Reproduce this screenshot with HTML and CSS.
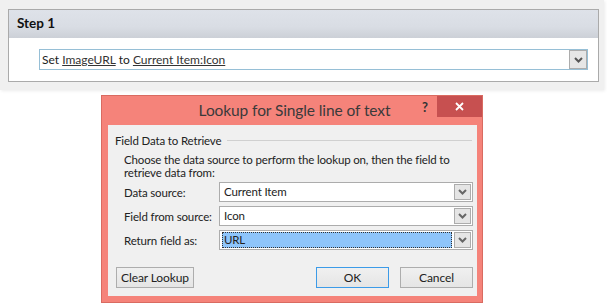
FILE: index.html
```html
<!DOCTYPE html>
<html lang="en">
<head>
  <meta charset="UTF-8" />
  <title>Workflow Step</title>
  <link rel="stylesheet" href="styles.css">
</head>
<body>
  <!-- Workflow step -->
  <div class="workflow">
    <div class="step">
      <div class="step-head">Step 1</div>
      <div class="step-body">
        <div class="action">
          <span class="action-text">Set <a href="#">ImageURL</a> to <a href="#">Current Item:Icon</a></span>
          <span class="drop-btn">
            <svg width="9" height="6" viewBox="0 0 9 6"><path d="M1 1 L4.5 4.5 L8 1" fill="none" stroke="#555" stroke-width="2"/></svg>
          </span>
        </div>
      </div>
    </div>
  </div>

  <!-- Lookup dialog -->
  <div class="dialog">
    <div class="titlebar">
      <span class="title">Lookup for Single line of text</span>
      <span class="help">?</span>
      <span class="close">
        <svg width="9" height="9" viewBox="0 0 9 9"><path d="M1 1 L8 8 M8 1 L1 8" stroke="#fff" stroke-width="1.8"/></svg>
      </span>
    </div>
    <div class="content">
      <div class="group-head">
        <span>Field Data to Retrieve</span>
        <span class="group-line"></span>
      </div>
      <p class="intro">Choose the data source to perform the lookup on, then the field to<br>retrieve data from:</p>

      <div class="row first">
        <label>Data source:</label>
        <div class="select">
          <span class="select-value">Current Item</span>
          <span class="drop-btn small">
            <svg width="9" height="6" viewBox="0 0 9 6"><path d="M1 1 L4.5 4.5 L8 1" fill="none" stroke="#666" stroke-width="2"/></svg>
          </span>
        </div>
      </div>
      <div class="row">
        <label>Field from source:</label>
        <div class="select">
          <span class="select-value">Icon</span>
          <span class="drop-btn small">
            <svg width="9" height="6" viewBox="0 0 9 6"><path d="M1 1 L4.5 4.5 L8 1" fill="none" stroke="#666" stroke-width="2"/></svg>
          </span>
        </div>
      </div>
      <div class="row">
        <label>Return field as:</label>
        <div class="select">
          <span class="select-value selected">URL</span>
          <span class="drop-btn small">
            <svg width="9" height="6" viewBox="0 0 9 6"><path d="M1 1 L4.5 4.5 L8 1" fill="none" stroke="#666" stroke-width="2"/></svg>
          </span>
        </div>
      </div>

      <div class="buttons">
        <button class="btn wide">Clear Lookup</button>
        <span class="spacer"></span>
        <button class="btn default">OK</button>
        <button class="btn">Cancel</button>
      </div>
    </div>
  </div>
</body>
</html>
```

FILE: styles.css
```css
* {
  margin: 0;
  padding: 0;
  box-sizing: border-box;
}

body {
  font-family: Lato, 'Liberation Sans', sans-serif;
  font-size: 11.5px;
  letter-spacing: -0.15px;
  color: #222;
  background: #fff;
}

/* Workflow step */
.workflow {
  width: 604px;
  height: 90px;
  background: #f0f0f0;
  padding: 9px 0 0 8px;
  box-shadow: 1px 1px 3px rgba(0, 0, 0, 0.08);
}

.step {
  width: 591px;
  height: 73px;
  border: 1px solid #aaa;
  background: #fff;
}

.step-head {
  height: 28px;
  padding-left: 8px;
  line-height: 27px;
  font-size: 13.5px;
  letter-spacing: 0;
  font-weight: bold;
  color: #111;
  background: linear-gradient(to bottom, #dee2e9, #d9dde4 60%, #ccd0d7);
}

.step-body {
  padding: 11px 0 0 30px;
}

.action {
  width: 549px;
  height: 21px;
  border: 1px solid #96bfd6;
  display: flex;
  align-items: stretch;
  justify-content: space-between;
}

.action-text {
  padding-left: 2px;
  font-size: 12px;
  letter-spacing: 0;
  line-height: 19px;
  color: #222;
}

.action-text a {
  color: #333;
  text-decoration: underline;
}

.drop-btn {
  width: 18px;
  display: flex;
  align-items: center;
  justify-content: center;
  background: #e6e6e6;
  border: 1px solid #acacac;
}

/* Dialog */
.dialog {
  width: 382px;
  height: 208px;
  margin: 5px 0 0 101px;
  background: #f5837a;
  border: 1px solid #d96b61;
  padding: 0 5px 6px 6px;
  display: flex;
  flex-direction: column;
}

.titlebar {
  height: 29px;
  display: flex;
  align-items: flex-start;
}

.title {
  flex: 1;
  text-align: center;
  font-size: 15.5px;
  letter-spacing: -0.1px;
  line-height: 29px;
  color: #3a3a3a;
  padding-left: 80px;
  white-space: nowrap;
}

.help {
  width: 36px;
  font-size: 13px;
  font-weight: bold;
  line-height: 22px;
  color: #333;
  padding-left: 21px;
}

.close {
  width: 45px;
  height: 21px;
  margin-right: -5px;
  background: #c75050;
  display: flex;
  align-items: center;
  justify-content: center;
}

.content {
  flex: 1;
  background: #f0f0f0;
  padding: 6px 4px 0 8px;
  display: flex;
  flex-direction: column;
}

.group-head {
  display: flex;
  align-items: center;
  gap: 6px;
  height: 18px;
  margin-left: -1px;
  padding-right: 1px;
  color: #222;
}

.group-line {
  flex: 1;
  height: 1px;
  background: #d0d0d0;
}

.intro {
  margin: 4px 0 0 8px;
  line-height: 13px;
  white-space: nowrap;
  color: #222;
}

.row {
  display: flex;
  align-items: center;
  margin: 4px 0 0 8px;
}

.row.first {
  margin-top: 3px;
}

.row label {
  width: 95px;
  flex-shrink: 0;
  white-space: nowrap;
}

.select {
  flex: 1;
  height: 20px;
  background: #fff;
  border: 1px solid #acacac;
  display: flex;
  padding: 1px 1px 1px 2px;
}

.select-value {
  flex: 1;
  line-height: 16px;
  padding-left: 2px;
  margin-right: 2px;
}

.select-value.selected {
  background: #8ec5fb;
  outline: 1px dotted #333;
  outline-offset: -1px;
}

.drop-btn.small {
  width: 17px;
  background: #e5e5e5;
}

.buttons {
  display: flex;
  margin-top: auto;
  margin-bottom: 8px;
  gap: 11px;
}

.spacer {
  flex: 1;
}

.btn {
  width: 73px;
  height: 21px;
  font-family: inherit;
  font-size: 12px;
  letter-spacing: -0.1px;
  color: #222;
  background: linear-gradient(to bottom, #f0f0f0, #e5e5e5);
  border: 1px solid #adadad;
}

.btn.wide {
  width: 78px;
}

.btn.default {
  border-color: #3c9be8;
}
```
